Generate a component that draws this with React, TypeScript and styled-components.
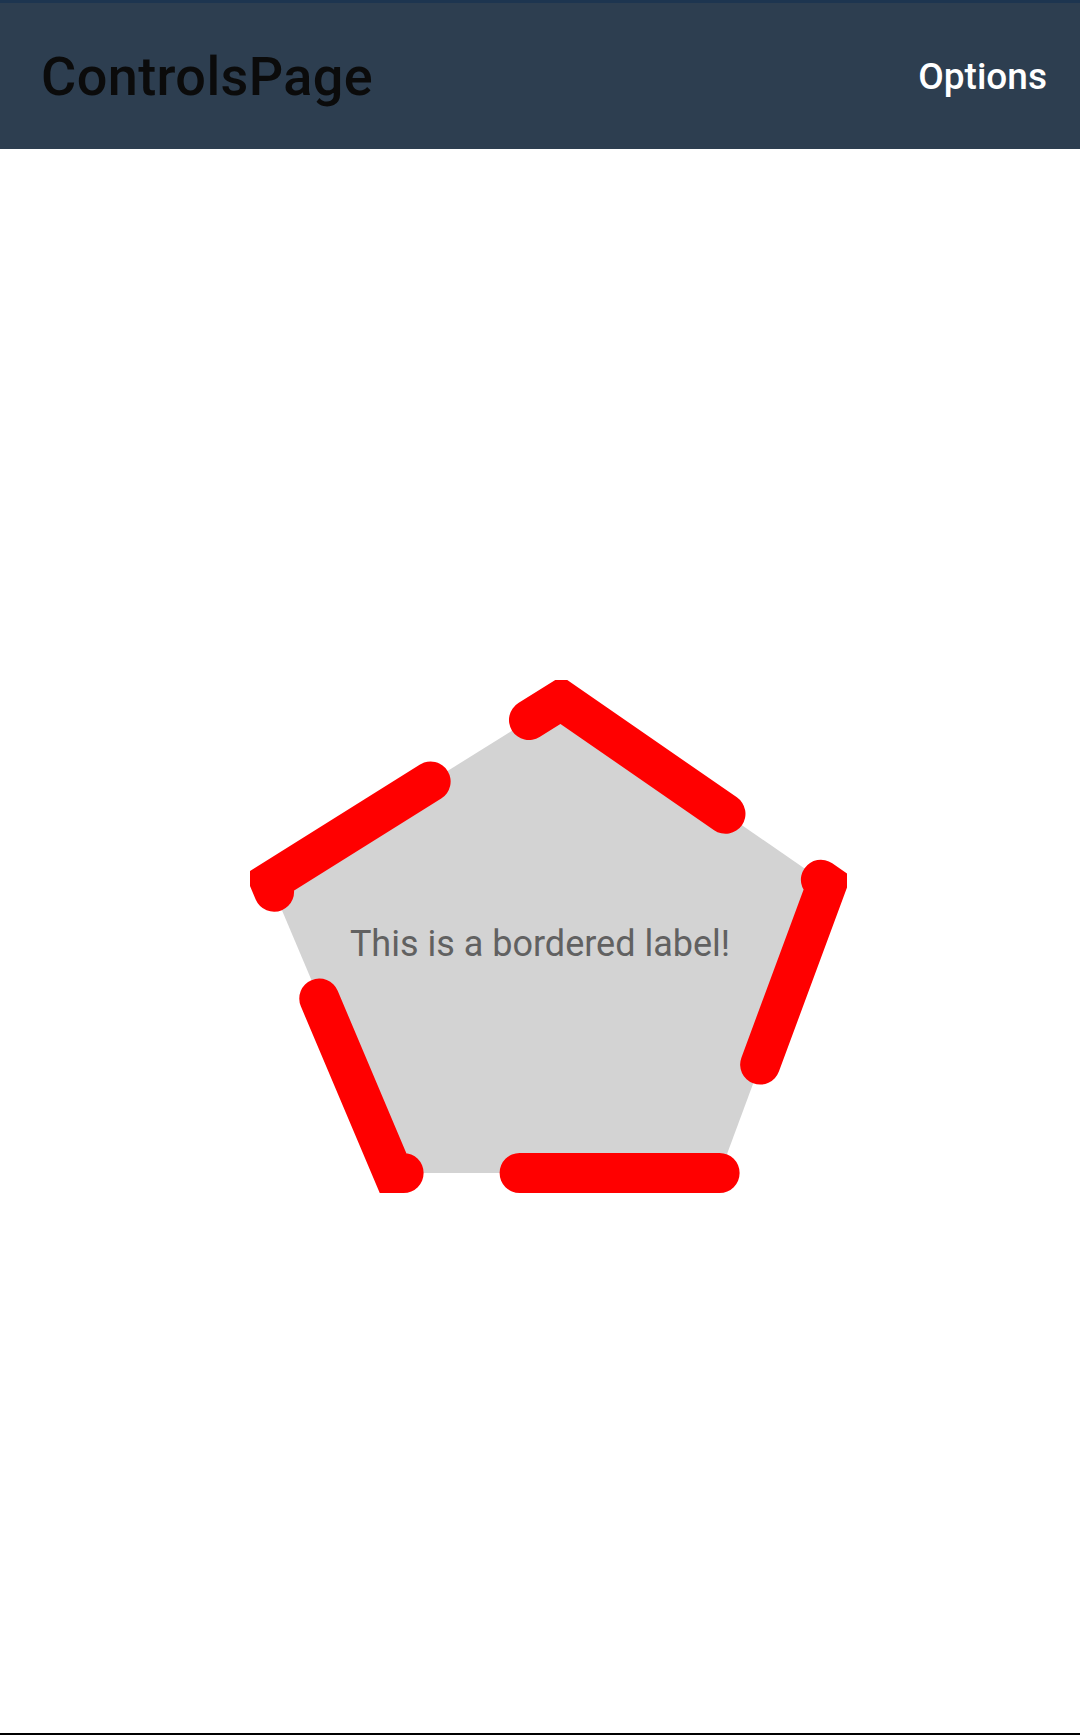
import React from 'react';
import styled, { createGlobalStyle } from 'styled-components';

const GlobalStyle = createGlobalStyle`
  html, body {
    margin: 0;
    padding: 0;
    background: #fff;
    font-family: Roboto, "Noto Sans", sans-serif;
  }
`;

const Page = styled.div`
  height: 1735px;
  display: flex;
  flex-direction: column;
  background: #fff;
`;

const StatusStrip = styled.div`
  height: 3px;
  background: #1d3550;
`;

const Toolbar = styled.header`
  height: 146px;
  background: #2d3e50;
  display: flex;
  align-items: center;
  justify-content: space-between;
  padding: 0 33px 0 41px;
`;

const Title = styled.h1`
  margin: 0;
  color: #0b0b0b;
  font-size: 54px;
  font-weight: 500;
  letter-spacing: 0.4px;
  line-height: 1;
  padding-top: 2px;
`;

const MenuItem = styled.span`
  color: #fff;
  font-size: 37px;
  font-weight: 500;
`;

const Content = styled.main`
  flex: 1;
  display: flex;
  justify-content: center;
  align-items: flex-start;
  padding-top: 531px;
`;

const Bordered = styled.div`
  width: 597px;
  height: 513px;
  margin-left: 17px;
  display: grid;

  & > * {
    grid-area: 1 / 1;
  }
`;

const Shape = styled.svg`
  display: block;
  overflow: hidden;
`;

const Label = styled.div`
  padding: 243px 17px 0 0;
  text-align: center;
  color: #616161;
  font-size: 36px;
  line-height: 42px;
`;

const BottomRule = styled.div`
  height: 2px;
  background: #000;
`;

// pentagon vertices inside the border box, starting at the top vertex
const points = [
  [311, 20],
  [577, 204],
  [470, 493],
  [143, 493],
  [20, 202],
];

const PentagonBorder = () => (
  <Shape width="597" height="513" viewBox="0 0 597 513">
    <polygon
      points={points.map((p) => p.join(',')).join(' ')}
      fill="#d3d3d3"
      stroke="#ff0000"
      strokeWidth="40"
      strokeDasharray="200 116"
      strokeLinecap="round"
      strokeLinejoin="miter"
    />
  </Shape>
);

export default function App() {
  return (
    <Page>
      <GlobalStyle />
      <StatusStrip />
      <Toolbar>
        <Title>ControlsPage</Title>
        <MenuItem>Options</MenuItem>
      </Toolbar>
      <Content>
        <Bordered>
          <PentagonBorder />
          <Label>This is a bordered label!</Label>
        </Bordered>
      </Content>
      <BottomRule />
    </Page>
  );
}
